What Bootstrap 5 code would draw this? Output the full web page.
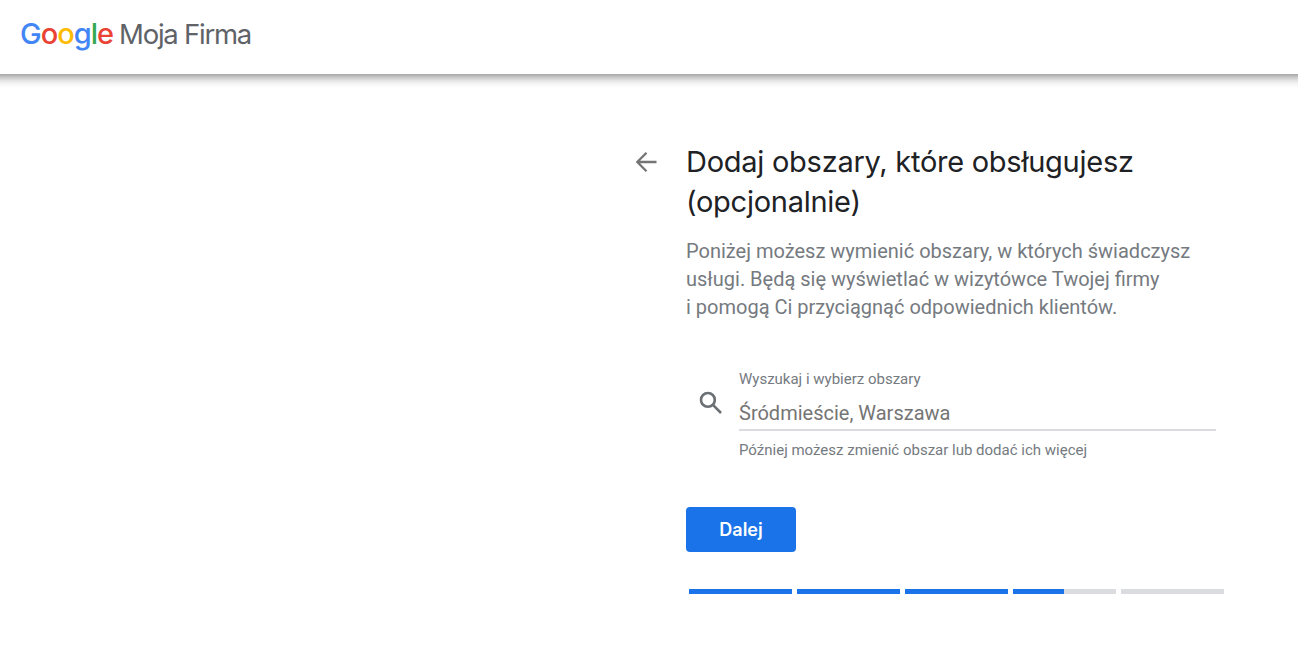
<!DOCTYPE html>
<html lang="pl">
<head>
<meta charset="utf-8">
<meta name="viewport" content="width=device-width, initial-scale=1">
<title>Google Moja Firma</title>
<link href="https://cdn.jsdelivr.net/npm/bootstrap@5.3.0/dist/css/bootstrap.min.css" rel="stylesheet">
<style>
body{font-family:Roboto,sans-serif;color:#757a7f;background:#fff;overflow:hidden}
.topbar{height:74px;padding:0 20px}
.topbar-shadow{height:14px;background:linear-gradient(#a6a6a6,#c6c6c6 22%,#e2e2e2 45%,#f5f5f5 70%,#fff)}
.brand{font-family:Inter,sans-serif;line-height:40px;margin-top:-6px;gap:6px}
.brand-g{font-size:29px;font-weight:500;letter-spacing:-1px}
.brand-p{font-size:27.5px;color:#5f6368;letter-spacing:-1.25px}
.c-b{color:#4285f4}.c-r{color:#ea4335}.c-y{color:#fbbc04}.c-g{color:#34a853}
.step{width:590px;margin-left:634px;padding-top:54px}
.back{width:52px}
.back svg{margin-top:8px}
h1{font-family:Inter,sans-serif;font-size:29px;line-height:40px;font-weight:400;color:#202124;letter-spacing:-.26px}
.intro{font-size:20px;line-height:28px;margin-top:15px}
.area{margin:49px 8px 0 13px;gap:16px}
.area svg{margin-top:21px}
.area label,.hint{font-size:15px;line-height:18px}
.area .form-control{font-family:inherit;font-size:20px;line-height:24px;height:43px;padding:13px 0 4px;border:0;border-bottom:2px solid #dadce0;border-radius:0;color:#757575}
.area .form-control::placeholder{color:#757575;opacity:1}
.hint{margin-top:10px}
.btn-next{width:110px;height:45px;background:#1a73e8;border-radius:4px;color:#fff;font-family:Inter,sans-serif;font-size:18px;font-weight:600;letter-spacing:0;line-height:43px;margin-top:48px}
.steps{gap:5px;margin:37px 0 0 3px}
.steps .progress{height:5px;border-radius:0;background:#dadce0}
.steps .progress-bar{background:#1a73e8}
</style>
</head>
<body>
<header class="topbar d-flex align-items-center">
  <div class="brand d-flex align-items-center">
    <span class="brand-g"><span class="c-b">G</span><span class="c-r">o</span><span class="c-y">o</span><span class="c-b">g</span><span class="c-g">l</span><span class="c-r">e</span></span>
    <span class="brand-p">Moja Firma</span>
  </div>
</header>
<div class="topbar-shadow"></div>
<main class="step d-flex">
  <div class="back flex-shrink-0">
    <svg class="d-block" width="24" height="24" viewBox="0 0 24 24" fill="none" stroke="#757575" stroke-width="2.3"><path d="M22.5 12H4M12.5 2.8 3.3 12l9.2 9.2"/></svg>
  </div>
  <div class="flex-grow-1">
    <h1 class="mb-0">Dodaj obszary, które obsługujesz<br>(opcjonalnie)</h1>
    <p class="intro mb-0">Poniżej możesz wymienić obszary, w których świadczysz<br>usługi. Będą się wyświetlać w wizytówce Twojej firmy<br>i&nbsp;pomogą Ci przyciągnąć odpowiednich klientów.</p>
    <div class="area d-flex">
      <svg class="flex-shrink-0" width="24" height="24" viewBox="0 0 24 24" fill="none" stroke="#6b7075" stroke-width="2.6"><circle cx="8.9" cy="8.9" r="6.9"/><path d="m13.7 13.7 8.3 8.3"/></svg>
      <div class="flex-grow-1">
        <label class="d-block" for="area">Wyszukaj i wybierz obszary</label>
        <input class="form-control shadow-none" id="area" type="text" placeholder="Śródmieście, Warszawa">
        <div class="hint">Później możesz zmienić obszar lub dodać ich więcej</div>
      </div>
    </div>
    <button class="btn btn-next d-block p-0 border-0" type="button">Dalej</button>
    <div class="steps d-flex">
      <div class="progress flex-fill"><div class="progress-bar w-100"></div></div>
      <div class="progress flex-fill"><div class="progress-bar w-100"></div></div>
      <div class="progress flex-fill"><div class="progress-bar w-100"></div></div>
      <div class="progress flex-fill"><div class="progress-bar" style="width:49.5%"></div></div>
      <div class="progress flex-fill"></div>
    </div>
  </div>
</main>
<script src="https://cdn.jsdelivr.net/npm/bootstrap@5.3.0/dist/js/bootstrap.bundle.min.js"></script>
</body>
</html>
